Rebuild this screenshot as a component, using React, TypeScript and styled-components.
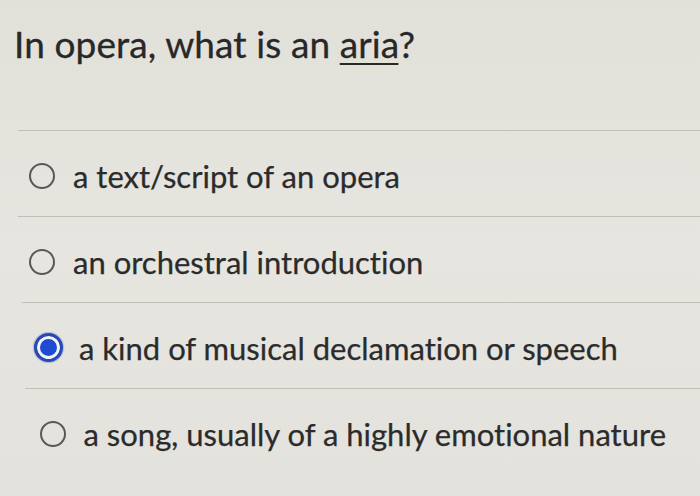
import React from "react";
import styled, { createGlobalStyle } from "styled-components";

const Global = createGlobalStyle`
  html, body { margin: 0; padding: 0; }
  body {
    width: 700px;
    height: 496px;
    overflow: hidden;
    background: #e4e3dd;
    font-family: Lato, "Open Sans", sans-serif;
    font-variant-ligatures: none;
    color: #2f2f2f;
  }
`;

const Page = styled.div`
  width: 700px;
  height: 496px;
  background: linear-gradient(180deg, #e1e0d9 0%, #e6e5df 50%, #e3e2dc 100%);
  display: flex;
  flex-direction: column;
`;

const Question = styled.h1`
  margin: 0;
  padding: 20px 0 0 14px;
  height: 110px;
  box-sizing: border-box;
  font-size: 37px;
  font-weight: 400;
  letter-spacing: 0.1px;
  line-height: 48px;
  color: #282828;
  -webkit-text-stroke: 0.3px #282828;
`;

const Underlined = styled.span`
  text-decoration: underline;
  text-decoration-thickness: 2px;
  text-underline-offset: 5px;
`;

const Options = styled.div`
  display: flex;
  flex-direction: column;
  padding-top: 20px;
`;

const Row = styled.label<{ $indent: number }>`
  display: flex;
  align-items: center;
  gap: 18px;
  height: 86px;
  box-sizing: border-box;
  margin-left: ${(p) => 18 + p.$indent}px;
  padding-left: ${(p) => 11 + p.$indent / 2}px;
  padding-top: 4px;
  border-top: 1px solid #bfbeb7;
  font-size: 31px;
  color: #2b2b2b;
  -webkit-text-stroke: 0.25px #2b2b2b;
  cursor: pointer;
`;

const Radio = styled.span<{ $checked: boolean }>`
  flex: none;
  width: ${(p) => (p.$checked ? 29 : 26)}px;
  height: ${(p) => (p.$checked ? 29 : 26)}px;
  margin-left: ${(p) => (p.$checked ? -1.5 : 0)}px;
  margin-right: ${(p) => (p.$checked ? -1.5 : 0)}px;
  border-radius: 50%;
  box-sizing: border-box;
  border: ${(p) => (p.$checked ? "3px solid #2748b5" : "2.5px solid #585856")};
  background: ${(p) => (p.$checked ? "#1f4bd0" : "transparent")};
  box-shadow: ${(p) =>
    p.$checked ? "inset 0 0 0 3px #f2f3f6, 0 0 1px 1px rgba(110,130,200,0.45)" : "none"};
`;

const options = [
  { text: "a text/script of an opera", indent: 0 },
  { text: "an orchestral introduction", indent: 0 },
  { text: "a kind of musical declamation or speech", indent: 4, checked: true },
  { text: "a song, usually of a highly emotional nature", indent: 7 },
];

export default function App() {
  return (
    <>
      <Global />
      <Page>
        <Question>
          In opera, what is an <Underlined>aria</Underlined>?
        </Question>
        <Options>
          {options.map((o) => (
            <Row key={o.text} $indent={o.indent}>
              <Radio $checked={!!o.checked} />
              <span>{o.text}</span>
            </Row>
          ))}
        </Options>
      </Page>
    </>
  );
}
